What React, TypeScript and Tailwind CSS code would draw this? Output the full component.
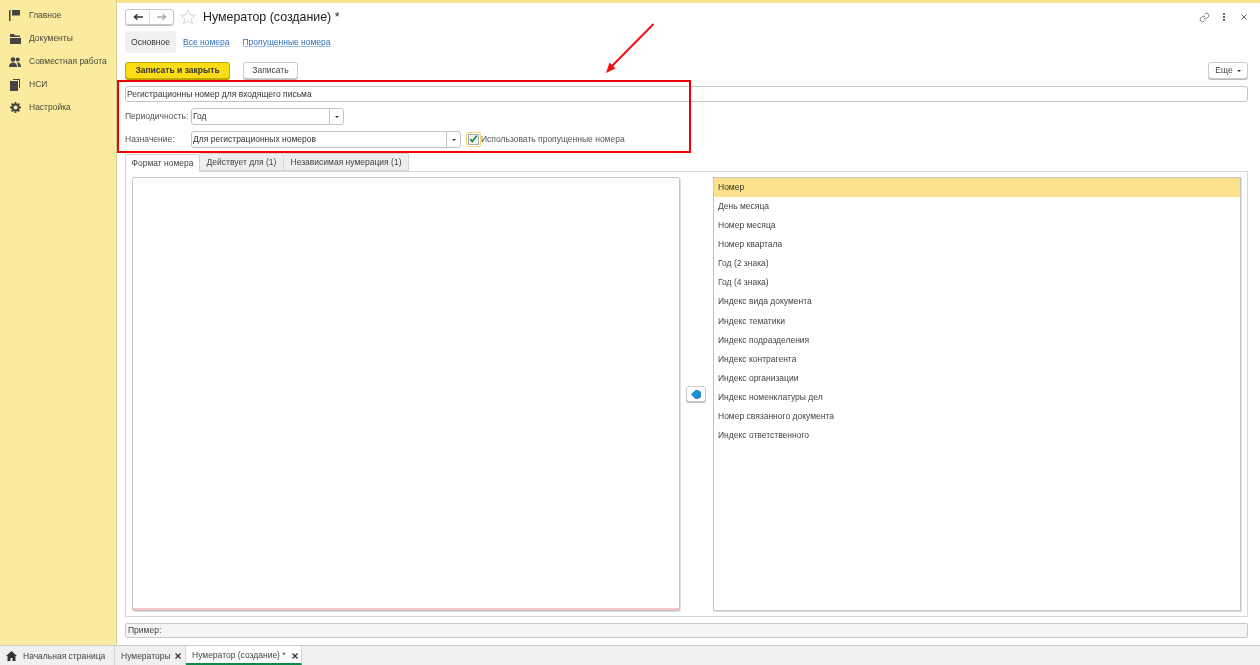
import React from "react";

const LINK = "text-[#2a6ebb] underline decoration-[#9cc0e8]";

function NavItem({ icon, label }: { icon: React.ReactNode; label: string }) {
  return (
    <div className="flex h-[23px] items-center text-[#4a4a3a]">
      <div className="flex w-[29px] justify-center pl-[1px]">{icon}</div>
      <span>{label}</span>
    </div>
  );
}

function Field({ w, text, caret = true }: { w: string; text: string; caret?: boolean }) {
  return (
    <div className={`flex h-[17px] items-center rounded-[3px] border border-[#c4c4c4] bg-white ${w}`}>
      <span className="flex-1 pl-[1px] text-[#333]">{text}</span>
      {caret && (
        <span className="flex h-full w-[14px] items-center justify-center border-l border-[#c4c4c4]">
          <span className="h-0 w-0 border-x-[2px] border-t-[2px] border-x-transparent border-t-[#333]" />
        </span>
      )}
    </div>
  );
}

const ITEMS = [
  "День месяца",
  "Номер месяца",
  "Номер квартала",
  "Год (2 знака)",
  "Год (4 знака)",
  "Индекс вида документа",
  "Индекс тематики",
  "Индекс подразделения",
  "Индекс контрагента",
  "Индекс организации",
  "Индекс номенклатуры дел",
  "Номер связанного документа",
  "Индекс ответственного",
];

export default function App() {
  return (
    <div
      className="relative flex h-[665px] w-[1260px] flex-col overflow-hidden whitespace-nowrap bg-white text-[8.5px] text-[#444] blur-[0.3px]"
      style={{ fontFamily: '"Liberation Sans", Arial, sans-serif' }}
    >
      <div className="flex h-[645px]">
        <aside className="w-[117px] shrink-0 border-r border-[#d9cf94] bg-[#fbeb9f] pt-[4px]">
          <NavItem
            label="Главное"
            icon={
              <svg width="12" height="11" viewBox="0 0 12 11" fill="#444">
                <rect x="0" y="0" width="1.5" height="11" />
                <path d="M3 0h8v5.500H3z" />
              </svg>
            }
          />
          <NavItem
            label="Документы"
            icon={
              <svg width="11" height="10" viewBox="0 0 11 10" fill="#444">
                <path d="M0 0h4l1 1.500h5V3H0zM0 4h11v6H0z" />
              </svg>
            }
          />
          <NavItem
            label="Совместная работа"
            icon={
              <svg width="12" height="10" viewBox="0 0 12 10" fill="#444">
                <circle cx="4" cy="2.500" r="2.300" />
                <circle cx="8.700" cy="2.500" r="2" />
                <path d="M0 10c0-3 1.500-4.500 4-4.500S8 7 8 10zM9 10c0-2-.4-3.200-1.200-4.300C10.500 5 12 7 12 10z" />
              </svg>
            }
          />
          <NavItem
            label="НСИ"
            icon={
              <svg width="10" height="12" viewBox="0 0 10 12" fill="#444">
                <path d="M3 0h7v9H9V1H3z" />
                <rect x="0" y="2" width="8" height="10" />
              </svg>
            }
          />
          <NavItem
            label="Настройка"
            icon={
              <svg width="11" height="11" viewBox="0 0 11 11">
                <circle cx="5.500" cy="5.500" r="3" fill="none" stroke="#444" strokeWidth="2" />
                <path
                  d="M5.500 0v2M5.500 9v2M0 5.500h2M9 5.500h2M1.600 1.600l1.400 1.400M8 8l1.400 1.400M1.600 9.400L3 8M8 3l1.400-1.400"
                  stroke="#444"
                  strokeWidth="1.800"
                />
              </svg>
            }
          />
        </aside>

        <main className="flex min-w-0 flex-1 flex-col border-t-[3px] border-[#f8e58c] pl-[8px] pr-[12px]">
          <div className="mt-[6px] flex h-[16px] items-center">
            <div className="flex h-[16px] w-[49px] rounded-[3px] border border-[#c8c8c8] shadow-[0_1px_0_#bbb]">
              <span className="flex flex-1 items-center justify-center border-r border-[#ddd]">
                <svg width="10" height="8" viewBox="0 0 11 8" fill="none" stroke="#333" strokeWidth="1.500">
                  <path d="M11 4H2M5 1L1.500 4 5 7" />
                </svg>
              </span>
              <span className="flex flex-1 items-center justify-center">
                <svg width="10" height="8" viewBox="0 0 11 8" fill="none" stroke="#aaa" strokeWidth="1.500">
                  <path d="M0 4h9M6 1l3.500 3L6 7" />
                </svg>
              </span>
            </div>
            <svg className="ml-[6px]" width="16" height="16" viewBox="0 0 16 16" fill="none" stroke="#d4d4d4">
              <path d="M8 1l2.100 4.700 5 .5-3.800 3.300 1.100 5L8 11.900l-4.400 2.600 1.100-5L.9 6.200l5-.5z" />
            </svg>
            <span className="ml-[7px] text-[12.4px] text-[#222]">Нумератор (создание) *</span>
            <div className="ml-auto flex items-center pr-[1px]">
              <svg width="11" height="11" viewBox="0 0 24 24" fill="none" stroke="#777" strokeWidth="2">
                <path d="M10 13a5 5 0 0 0 7.500.5l3-3a5 5 0 0 0-7-7l-1.700 1.700" />
                <path d="M14 11a5 5 0 0 0-7.500-.5l-3 3a5 5 0 0 0 7 7l1.700-1.700" />
              </svg>
              <span className="ml-[13px] flex flex-col gap-[1px]">
                <span className="h-[2px] w-[2px] bg-[#666]" />
                <span className="h-[2px] w-[2px] bg-[#666]" />
                <span className="h-[2px] w-[2px] bg-[#666]" />
              </span>
              <svg className="ml-[16px]" width="6" height="6" viewBox="0 0 6 6" stroke="#666" strokeWidth="1">
                <path d="M.5.500l5 5M5.500.500l-5 5" />
              </svg>
            </div>
          </div>

          <div className="mt-[6px] flex h-[22px] items-center">
            <span className="flex h-full w-[51px] items-center justify-center rounded-[2px] bg-[#f1f1f1] text-[#333]">
              Основное
            </span>
            <span className={`ml-[7px] ${LINK}`}>Все номера</span>
            <span className={`ml-[13px] ${LINK}`}>Пропущенные номера</span>
          </div>

          <div className="mt-[9px] flex h-[17px] items-stretch">
            <button className="w-[105px] rounded-[3px] border border-[#c9a800] bg-[#fcdc14] font-bold text-[#333] shadow-[0_1px_0_#b9a000]">
              Записать и закрыть
            </button>
            <button className="ml-[13px] w-[55px] rounded-[3px] border border-[#ccc] bg-white text-[#444] shadow-[0_1px_0_#bbb]">
              Записать
            </button>
            <button className="ml-auto flex w-[40px] items-center justify-center gap-[4px] rounded-[3px] border border-[#ccc] bg-white text-[#444] shadow-[0_1px_0_#bbb]">
              Еще
              <span className="h-0 w-0 border-x-[2px] border-t-[2px] border-x-transparent border-t-[#333]" />
            </button>
          </div>

          <div className="mt-[7px] flex h-[16px] items-center rounded-[3px] border border-[#c4c4c4] pl-[1px] text-[#333]">
            Регистрационны номер для входящего письма
          </div>

          <div className="mt-[6px] flex items-center">
            <span className="w-[66px] text-[#555]">Периодичность:</span>
            <Field w="w-[153px]" text="Год" />
          </div>

          <div className="mt-[6px] flex items-center">
            <span className="w-[66px] text-[#555]">Назначение:</span>
            <Field w="w-[270px]" text="Для регистрационных номеров" />
            <span className="ml-[5px] flex h-[15px] w-[15px] items-center justify-center rounded-[2px] border border-[#f4d77a]">
              <span className="flex h-[11px] w-[11px] items-center justify-center border border-[#aaa] bg-[#f2f2f2]">
                <svg width="11" height="10" viewBox="0 0 11 10" fill="none" stroke="#0b8a3e" strokeWidth="2" className="-mt-[1px]">
                  <path d="M1.500 5l2.500 3L9.500 1" />
                </svg>
              </span>
            </span>
            <span className="text-[#555]">Использовать пропущенные номера</span>
          </div>

          <div className="mt-[5px] flex h-[18px] items-stretch text-[#444]">
            <span className="relative top-[1px] z-10 flex w-[75px] items-center justify-center rounded-t-[2px] border border-b-0 border-[#d4d4d4] bg-white pb-[1px]">
              Формат номера
            </span>
            <span className="flex w-[84px] items-center justify-center rounded-t-[2px] border border-l-0 border-[#d4d4d4] bg-[#eeeeee]">
              Действует для (1)
            </span>
            <span className="flex w-[125px] items-center justify-center rounded-t-[2px] border border-l-0 border-[#d4d4d4] bg-[#eeeeee]">
              Независимая нумерация (1)
            </span>
          </div>

          <div className="flex h-[446px] border border-[#d8d8d8] px-[6px] pb-[5px] pt-[5px]">
            <div className="flex w-[548px] flex-col justify-end rounded-[2px] border border-[#c4c4c4] bg-white shadow-[1px_1px_0_#e0e0e0]">
              <div className="h-[2px] bg-[#f6c6c6]" />
            </div>
            <div className="flex w-[33px] items-center pl-[6px]">
              <span className="flex h-[16px] w-[20px] items-center justify-center rounded-[3px] border border-[#ccc] bg-white shadow-[0_1px_0_#bbb]">
                <svg width="10" height="9" viewBox="0 0 10 9" fill="#1b8fd6">
                  <path d="M0 4.500L4.500 0h2.500L10 2v5L7 9H4.500z" />
                </svg>
              </span>
            </div>
            <div className="flex w-[528px] flex-col border border-[#c4c4c4] bg-white shadow-[1px_1px_0_#e0e0e0]">
              <div className="flex h-[19px] shrink-0 items-center bg-[#fde28c] pl-[4px] text-[#333]">Номер</div>
              {ITEMS.map((t) => (
                <div key={t} className="flex h-[19.07px] shrink-0 items-center pl-[4px] text-[#444]">
                  {t}
                </div>
              ))}
            </div>
          </div>

          <div className="mt-[6px] flex h-[15px] items-center rounded-[2px] border border-[#c8c8c8] bg-[#f5f5f5] pl-[2px] text-[#444]">
            Пример:
          </div>
        </main>
      </div>

      <footer className="flex h-[20px] shrink-0 items-stretch border-t border-[#cfcfcf] bg-[#f0f0f0] text-[#444]">
        <div className="flex w-[115px] items-center border-r border-[#d8d8d8] pl-[6px] pt-[1px]">
          <svg width="11" height="10" viewBox="0 0 11 10" fill="#333">
            <path d="M5.500 0L11 5H9.500v5H6.500V7h-2v3H1.500V5H0z" />
          </svg>
          <span className="ml-[6px]">Начальная страница</span>
        </div>
        <div className="flex w-[71px] items-center border-r border-[#d8d8d8] pl-[6px] pt-[1px]">
          <span>Нумераторы</span>
          <svg className="ml-[4px]" width="6" height="6" viewBox="0 0 6 6" stroke="#333" strokeWidth="1.300">
            <path d="M.5.500l5 5M5.500.500l-5 5" />
          </svg>
        </div>
        <div className="flex w-[116px] items-center border-b-2 border-r border-b-[#0a8a4a] border-r-[#d8d8d8] bg-white pl-[6px] pt-[2px]">
          <span>Нумератор (создание) *</span>
          <svg className="ml-[6px]" width="6" height="6" viewBox="0 0 6 6" stroke="#333" strokeWidth="1.300">
            <path d="M.5.500l5 5M5.500.500l-5 5" />
          </svg>
        </div>
      </footer>

      {/* Annotations that lie over the screenshot */}
      <div className="pointer-events-none absolute left-[117px] top-[80px] h-[73px] w-[574px] border-2 border-[#f00000]" />
      <svg className="pointer-events-none absolute left-[600px] top-[18px]" width="60" height="60" viewBox="0 0 60 60">
        <path d="M53.500 6L11 49" stroke="#ee1111" strokeWidth="2" />
        <path d="M6 55l3.500-10.500 6 6z" fill="#ee1111" />
      </svg>
    </div>
  );
}
